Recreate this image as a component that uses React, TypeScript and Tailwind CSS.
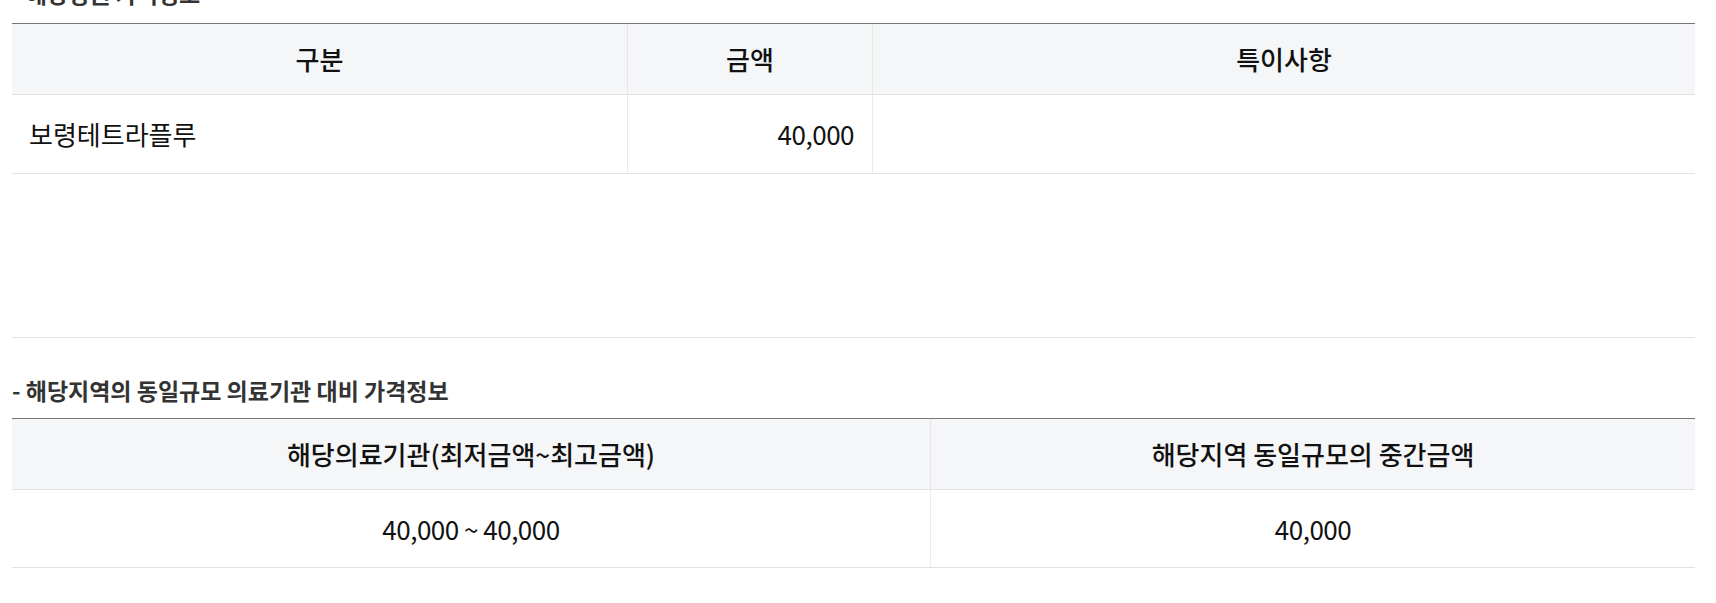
export default function App() {
  const cell = 'text-[26px] leading-[32px] text-[#111]';

  return (
    <div className="min-h-screen bg-white overflow-hidden">
      <div className="w-[1683px] ml-[12px] -mt-[23px] font-['Noto_Sans_CJK_KR','Noto_Sans',sans-serif]">
        <h3 className="h-[32px] mb-[14px] text-[23px] leading-[32px] font-bold text-[#333]">
          - 해당병원 가격정보
        </h3>

        {/* 항목별 금액 */}
        <div className="border-t border-[#767676]">
          <div className="grid grid-cols-[616px_245px_1fr] bg-[#f5f6f8] border-b border-[#e2e2e2]">
            <div className={`h-[70px] flex items-center justify-center border-r border-[#e6e6e6] font-medium ${cell}`}>구분</div>
            <div className={`h-[70px] flex items-center justify-center border-r border-[#e6e6e6] font-medium ${cell}`}>금액</div>
            <div className={`h-[70px] flex items-center justify-center font-medium ${cell}`}>특이사항</div>
          </div>
          <div className="grid grid-cols-[616px_245px_1fr] border-b border-[#e2e2e2]">
            <div className={`h-[78px] flex items-center px-[17px] border-r border-[#ececec] ${cell}`}>보령테트라플루</div>
            <div className={`h-[78px] flex items-center justify-end px-[18px] border-r border-[#ececec] tracking-[-0.5px] ${cell}`}>
              40,000
            </div>
            <div className="h-[78px]" />
          </div>
        </div>

        <div className="h-[164px] border-b border-[#e2e2e2]" />

        <h3 className="h-[32px] mt-[36px] mb-[12px] text-[23px] leading-[32px] font-bold text-[#333]">
          - 해당지역의 동일규모 의료기관 대비 가격정보
        </h3>

        <div className="border-t border-[#767676]">
          <div className="grid grid-cols-[919px_1fr] bg-[#f5f6f8] border-b border-[#e2e2e2]">
            <div className={`h-[70px] flex items-center justify-center border-r border-[#e6e6e6] font-medium ${cell}`}>
              해당의료기관(최저금액~최고금액)
            </div>
            <div className={`h-[70px] flex items-center justify-center font-medium ${cell}`}>해당지역 동일규모의 중간금액</div>
          </div>
          <div className="grid grid-cols-[919px_1fr] border-b border-[#e2e2e2]">
            <div className={`h-[77px] flex items-center justify-center border-r border-[#ececec] tracking-[-0.5px] ${cell}`}>
              40,000 ~ 40,000
            </div>
            <div className={`h-[77px] flex items-center justify-center tracking-[-0.5px] ${cell}`}>40,000</div>
          </div>
        </div>
      </div>
    </div>
  );
}
